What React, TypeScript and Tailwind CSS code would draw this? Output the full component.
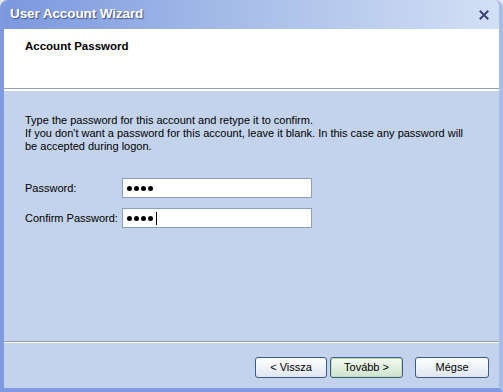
import React from "react";

export default function App() {
  return (
    <div className="w-[503px] h-[392px] bg-[#e4e8ef] overflow-hidden" style={{ fontFamily: "'Liberation Sans', Arial, sans-serif" }}>
      <div className="w-full h-full flex flex-col rounded-t-[8px] overflow-hidden border-l-[4px] border-r-[4px] border-b-[4px] border-[#7f9ae0] border-r-[#a8bde6] bg-[#c3d3ec]">
        {/* Title bar */}
        <div className="h-[29px] shrink-0 flex items-center justify-between pr-[10px] bg-gradient-to-r from-[#7b97de] via-[#a9bfe9] to-[#d4e0f5] -ml-[4px] -mr-[4px] pl-[10px]">
          <span className="text-white font-bold text-[13.5px] tracking-[-0.1px]" style={{ textShadow: "1px 1px 1px #3b4f8f" }}>
            User Account Wizard
          </span>
          <svg width="10" height="10" viewBox="0 0 10 10" className="mr-[4px] mt-[1px]">
            <path d="M1.5 1.5 L8.5 8.5 M8.5 1.5 L1.5 8.5" stroke="#3d4275" strokeWidth="2" strokeLinecap="square" />
          </svg>
        </div>
        {/* Header */}
        <div className="h-[59px] shrink-0 bg-white pl-[21px] pt-[4px]">
          <span className="font-bold text-[11.5px] text-black">Account Password</span>
        </div>
        <div className="h-[2px] shrink-0 bg-[#8da1b7] border-b border-white" />
        <div className="h-px shrink-0 bg-white" />
        {/* Content */}
        <div className="flex-1 flex flex-col pl-[21px] pr-[10px] pt-[23px]">
          <div className="text-[11px] leading-[13px] text-black">
            <div>Type the password for this account and retype it to confirm.</div>
            <div>If you don't want a password for this account, leave it blank. In this case any password will</div>
            <div>be accepted during logon.</div>
          </div>
          <div className="mt-[25px] flex flex-col gap-[10px]">
            <div className="flex items-center h-[20px]">
              <span className="w-[97px] text-[11px] text-black">Password:</span>
              <div className="w-[190px] h-[20px] bg-white border border-[#8ba0bc] flex items-center pl-[4px] gap-[2px]">
                {[0, 1, 2, 3].map((i) => (
                  <span key={i} className="w-[5px] h-[5px] rounded-full bg-black" />
                ))}
              </div>
            </div>
            <div className="flex items-center h-[20px]">
              <span className="w-[97px] text-[11px] text-black">Confirm Password:</span>
              <div className="w-[190px] h-[20px] bg-white border border-[#8ba0bc] flex items-center pl-[4px] gap-[2px]">
                {[0, 1, 2, 3].map((i) => (
                  <span key={i} className="w-[5px] h-[5px] rounded-full bg-black" />
                ))}
                <span className="w-px h-[13px] bg-black ml-[1px]" />
              </div>
            </div>
          </div>
          <div className="flex-1" />
        </div>
        <div className="h-[2px] shrink-0 bg-[#8ba0b6] border-b border-white" />
        <div className="h-[45px] shrink-0 flex items-start justify-end pr-[10px] pt-[14px]">
          <button className="w-[72px] h-[21px] rounded-[3px] border border-[#3c5a8e] bg-gradient-to-b from-white to-[#dfe6f1] text-[11px] text-black">
            &lt; Vissza
          </button>
          <button className="ml-[3px] w-[73px] h-[21px] rounded-[3px] border border-[#3c5a8e] bg-gradient-to-b from-[#f4fbf2] to-[#cfe3cd] text-[11px] text-black shadow-[inset_0_0_0_1px_#bfe0b0]">
            Tovább &gt;
          </button>
          <button className="ml-[12px] w-[74px] h-[21px] rounded-[3px] border border-[#3c5a8e] bg-gradient-to-b from-white to-[#dfe6f1] text-[11px] text-black">
            Mégse
          </button>
        </div>
      </div>
    </div>
  );
}
